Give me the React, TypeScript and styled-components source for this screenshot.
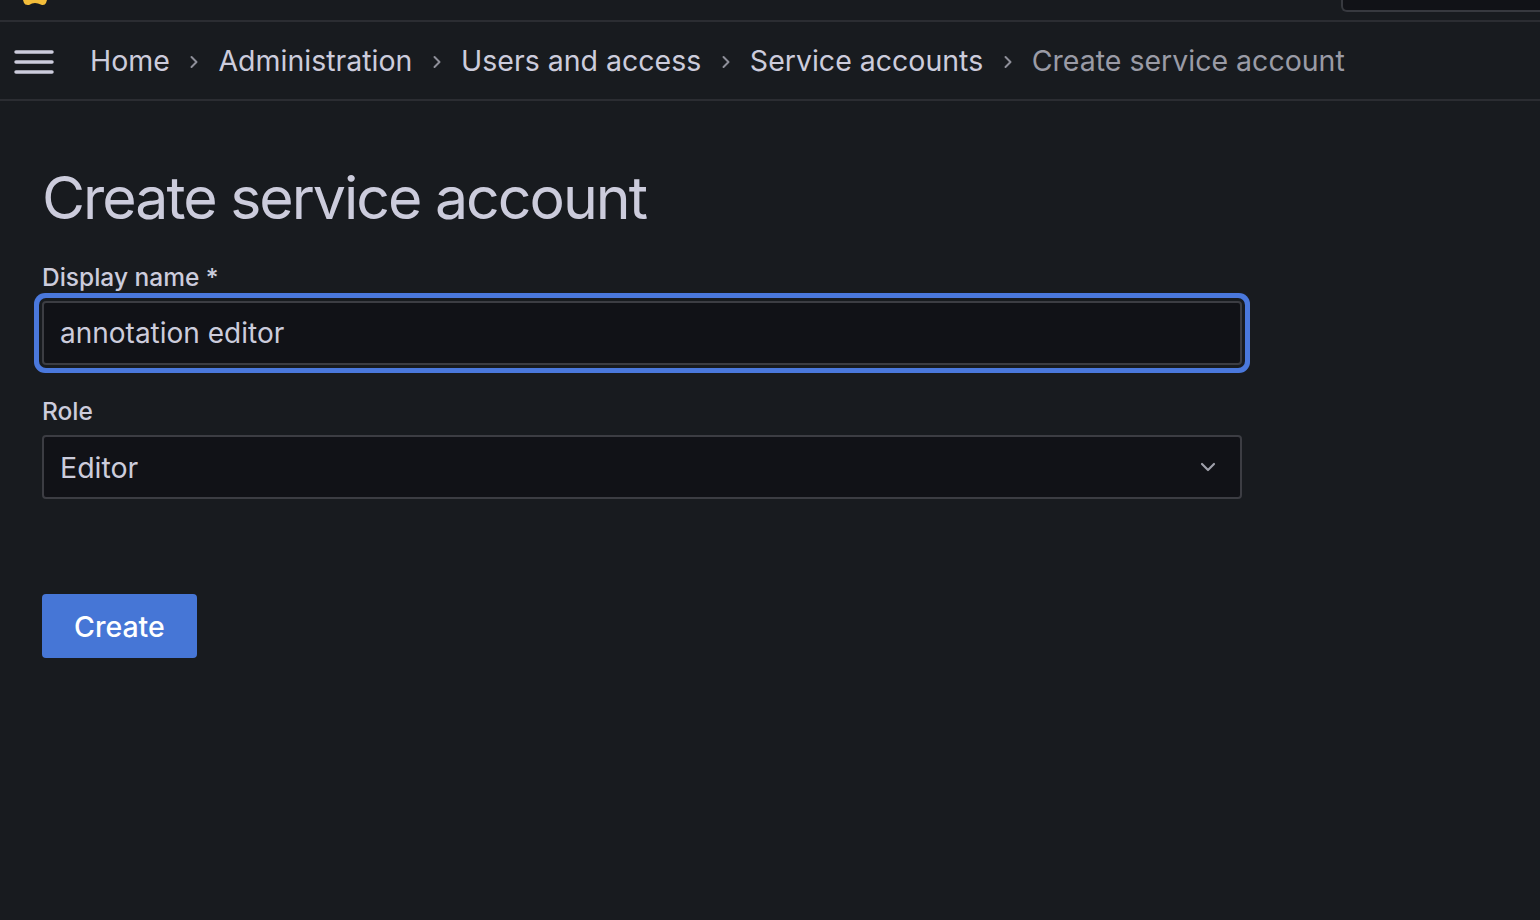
import React from "react";
import styled, { createGlobalStyle } from "styled-components";

const Global = createGlobalStyle`
  html, body { margin: 0; padding: 0; background: #181b1f; }
  body { font-family: Inter, "Noto Sans", sans-serif; color: #ccccdc; -webkit-font-smoothing: antialiased; }
  * { box-sizing: border-box; }
`;

const Page = styled.div`
  min-height: 920px;
  background: #181b1f;
  display: flex;
  flex-direction: column;
`;

const TopBar = styled.header`
  height: 22px;
  border-bottom: 2px solid #2b2d32;
  display: flex;
  align-items: flex-start;
  justify-content: space-between;
  padding-left: 23px;
`;

const Search = styled.div`
  width: 199px;
  height: 12px;
  background: #111217;
  border-left: 2px solid #37393f;
  border-bottom: 2px solid #37393f;
  border-bottom-left-radius: 6px;
`;

const CrumbBar = styled.nav`
  height: 79px;
  padding: 2px 0 0 14px;
  border-bottom: 2px solid #2b2d32;
  display: flex;
  align-items: center;
  gap: 36px;
`;

const CrumbList = styled.ol`
  list-style: none;
  margin: 0;
  padding: 0;
  display: flex;
  align-items: center;
  gap: 18.3px;
`;

const Crumb = styled.li<{ $current?: boolean }>`
  font-size: 28.5px;
  line-height: 1;
  color: ${(p) => (p.$current ? "#9a9ba6" : "#ccccdc")};
  white-space: nowrap;
`;

const Sep = styled.li`
  display: flex;
  align-items: center;
  color: #8e8f99;
`;

const Content = styled.main`
  padding: 62px 42px 0;
  display: flex;
  flex-direction: column;
`;

const Title = styled.h1`
  margin: 0 0 29px;
  font-size: 59px;
  font-weight: 400;
  letter-spacing: -2px;
  line-height: 70px;
  color: #ccccdc;
`;

const Form = styled.form`
  width: 1200px;
  display: flex;
  flex-direction: column;
`;

const Field = styled.div`
  display: flex;
  flex-direction: column;
  margin-bottom: 31px;
`;

const Label = styled.label`
  font-size: 24.5px;
  font-weight: 500;
  line-height: 30px;
  color: #ccccdc;
  margin-bottom: 9px;
`;

const Input = styled.input`
  height: 64px;
  width: 100%;
  background: #111217;
  border: 2px solid #3c3d43;
  border-radius: 4px;
  padding: 0 16px;
  font-family: inherit;
  font-size: 28px;
  color: #ccccdc;
  outline: none;
  box-shadow: 0 0 0 3px #181b1f, 0 0 0 8px #4a78dc;
`;

const SelectBox = styled.div`
  height: 64px;
  width: 100%;
  background: #111217;
  border: 2px solid #3c3d43;
  border-radius: 4px;
  padding: 0 24px 0 16px;
  display: flex;
  align-items: center;
  justify-content: space-between;
  font-size: 28.5px;
  color: #ccccdc;
`;

const Chevron = styled.span`
  display: flex;
  color: #9fa0aa;
`;

const Actions = styled.div`
  margin-top: 64px;
  display: flex;
`;

const Button = styled.button`
  height: 64px;
  padding: 0 32px;
  background: #4676d6;
  color: #fff;
  border: none;
  border-radius: 4px;
  font-family: inherit;
  font-size: 28.5px;
  font-weight: 500;
  cursor: pointer;
`;

const Logo = () => (
  <svg width="24" height="6" viewBox="0 0 24 6">
    <path d="M0 0 H24 L23 3 Q22 5.5 19 5 L15 3.5 Q12 2.5 9 3.5 L6 5 Q2 5.5 1 3 Z" fill="#f3bd3a" />
  </svg>
);

const Menu = () => (
  <svg width="40" height="26" viewBox="0 0 40 26">
    <g stroke="#ccccdc" strokeWidth="3.5" strokeLinecap="round">
      <line x1="2" y1="3" x2="38" y2="3" />
      <line x1="2" y1="13" x2="38" y2="13" />
      <line x1="2" y1="23" x2="38" y2="23" />
    </g>
  </svg>
);

const ChevRight = () => (
  <svg width="12" height="16" viewBox="0 0 12 16">
    <path d="M3.5 3 L8.5 8 L3.5 13" fill="none" stroke="currentColor" strokeWidth="2" strokeLinecap="round" strokeLinejoin="round" />
  </svg>
);

const ChevDown = () => (
  <svg width="16" height="10" viewBox="0 0 16 10">
    <path d="M2 2 L8 8 L14 2" fill="none" stroke="currentColor" strokeWidth="2.2" strokeLinecap="round" strokeLinejoin="round" />
  </svg>
);

const crumbs = ["Home", "Administration", "Users and access", "Service accounts"];

export default function App() {
  return (
    <Page>
      <Global />
      <TopBar>
        <Logo />
        <Search />
      </TopBar>
      <CrumbBar>
        <Menu />
        <CrumbList>
          {crumbs.map((c) => (
            <React.Fragment key={c}>
              <Crumb>{c}</Crumb>
              <Sep>
                <ChevRight />
              </Sep>
            </React.Fragment>
          ))}
          <Crumb $current>Create service account</Crumb>
        </CrumbList>
      </CrumbBar>
      <Content>
        <Title>Create service account</Title>
        <Form onSubmit={(e) => e.preventDefault()}>
          <Field>
            <Label htmlFor="name">Display name *</Label>
            <Input id="name" defaultValue="annotation editor" />
          </Field>
          <Field>
            <Label>Role</Label>
            <SelectBox>
              <span>Editor</span>
              <Chevron>
                <ChevDown />
              </Chevron>
            </SelectBox>
          </Field>
          <Actions>
            <Button type="button">Create</Button>
          </Actions>
        </Form>
      </Content>
    </Page>
  );
}
